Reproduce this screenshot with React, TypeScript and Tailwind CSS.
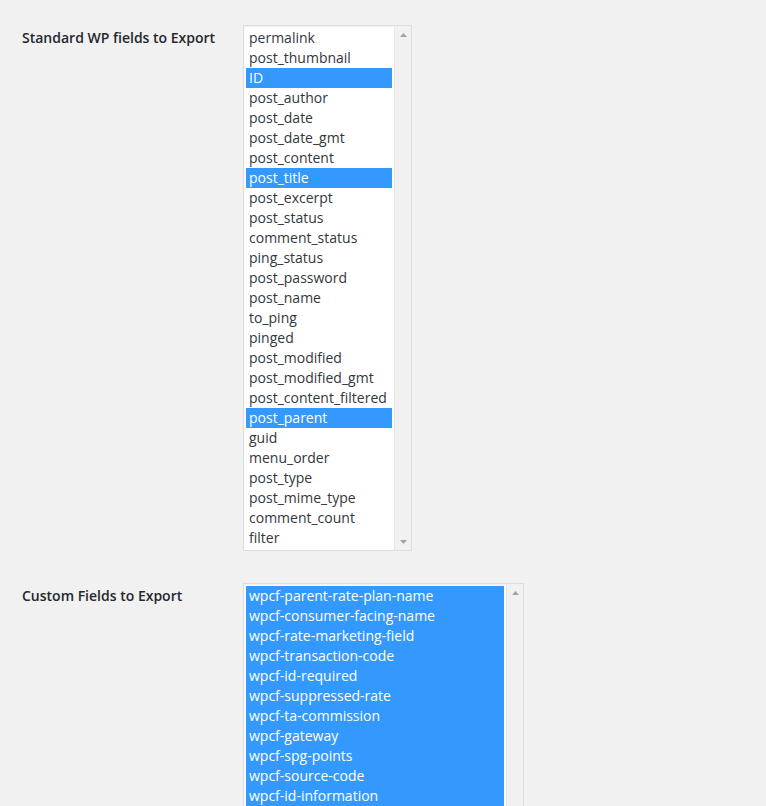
import React from 'react';

const standardFields = [
  'permalink',
  'post_thumbnail',
  'ID',
  'post_author',
  'post_date',
  'post_date_gmt',
  'post_content',
  'post_title',
  'post_excerpt',
  'post_status',
  'comment_status',
  'ping_status',
  'post_password',
  'post_name',
  'to_ping',
  'pinged',
  'post_modified',
  'post_modified_gmt',
  'post_content_filtered',
  'post_parent',
  'guid',
  'menu_order',
  'post_type',
  'post_mime_type',
  'comment_count',
  'filter',
];

const selectedStandard = ['ID', 'post_title', 'post_parent'];

const customFields = [
  'wpcf-parent-rate-plan-name',
  'wpcf-consumer-facing-name',
  'wpcf-rate-marketing-field',
  'wpcf-transaction-code',
  'wpcf-id-required',
  'wpcf-suppressed-rate',
  'wpcf-ta-commission',
  'wpcf-gateway',
  'wpcf-spg-points',
  'wpcf-source-code',
  'wpcf-id-information',
];

const ArrowUp = () => (
  <svg width="7" height="4" viewBox="0 0 7 4">
    <path d="M3.5 0 L7 4 L0 4 Z" fill="#a3a3a3" />
  </svg>
);

const ArrowDown = () => (
  <svg width="7" height="4" viewBox="0 0 7 4">
    <path d="M0 0 L7 0 L3.5 4 Z" fill="#a3a3a3" />
  </svg>
);

type ListProps = {
  items: string[];
  selected: (item: string) => boolean;
  listWidth: string;
  listHeight: string;
};

// fake multi-select box with a classic scrollbar column
const MultiSelect: React.FC<ListProps> = ({ items, selected, listWidth, listHeight }) => (
  <div className="flex border border-[#dddddd] bg-white shadow-[inset_0_1px_2px_rgba(0,0,0,0.07)]">
    <div className={`p-[2px] overflow-hidden ${listHeight}`}>
      <ul className={listWidth}>
        {items.map((item) => (
          <li
            key={item}
            className={`h-5 pl-[3px] leading-5 whitespace-nowrap ${
              selected(item) ? 'bg-[#3399ff] text-white' : 'text-[#32373c]'
            }`}
          >
            {item}
          </li>
        ))}
      </ul>
    </div>
    <div className="w-[17px] flex flex-col justify-between bg-[#f1f1f1] border-l border-[#e6e6e6]">
      <div className="h-[17px] flex items-center justify-center">
        <ArrowUp />
      </div>
      <div className="h-[17px] flex items-center justify-center">
        <ArrowDown />
      </div>
    </div>
  </div>
);

const App: React.FC = () => {
  return (
    <div
      className="h-[806px] overflow-hidden bg-[#f1f1f1] pl-[22px] pt-[25px] text-[14px]"
      style={{ fontFamily: '"Open Sans", "Liberation Sans", sans-serif' }}
    >
      <div className="flex">
        <div className="w-[221px] pt-[3px] font-semibold leading-5 text-[#23282d]">
          Standard WP fields to Export
        </div>
        <MultiSelect
          items={standardFields}
          selected={(item) => selectedStandard.includes(item)}
          listWidth="w-[146px]"
          listHeight="h-[524px]"
        />
      </div>

      <div className="flex mt-[32px]">
        <div className="w-[221px] pt-[3px] font-semibold leading-5 text-[#23282d]">
          Custom Fields to Export
        </div>
        <MultiSelect
          items={customFields}
          selected={() => true}
          listWidth="w-[258px]"
          listHeight="h-[524px]"
        />
      </div>
    </div>
  );
};

export default App;
